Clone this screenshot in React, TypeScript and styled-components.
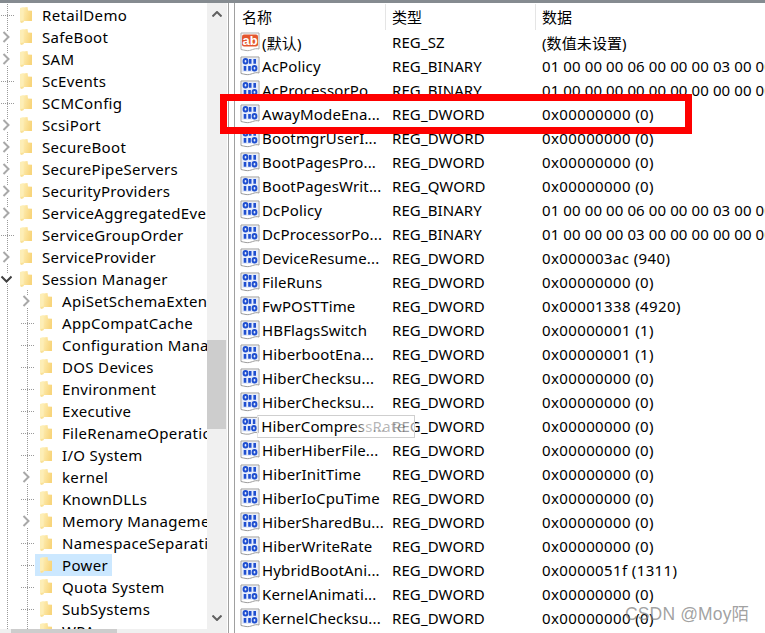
import React from "react";
import styled, { createGlobalStyle } from "styled-components";

const Global = createGlobalStyle`
  html, body { margin: 0; padding: 0; background: #fff; }
  body { font-family: "Noto Sans", "Noto Sans CJK SC", sans-serif; font-size: 15px; color: #000; }
`;

const Window = styled.div`
  position: relative;
  width: 765px;
  height: 633px;
  overflow: hidden;
  display: flex;
  box-sizing: border-box;
  border-top: 3px solid #858b90;
  background: #fff;
`;

const LeftPane = styled.div`
  width: 227px;
  flex: none;
  display: flex;
  flex-direction: column;
`;
const LeftBody = styled.div`
  flex: 1;
  min-height: 0;
  display: flex;
`;
const Tree = styled.div`
  width: 207px;
  flex: none;
  overflow: hidden;
  padding-top: 1px;
  box-sizing: border-box;
`;
const TreeRow = styled.div`
  display: flex;
  height: 22px;
  white-space: nowrap;
`;
const dots = `linear-gradient(#9a9a9a 50%, transparent 50%)`;
const hdots = `linear-gradient(to right, #9a9a9a 50%, transparent 50%)`;
const Gutter = styled.div<{ $wide?: boolean; $branch?: boolean }>`
  width: ${(p) => (p.$wide ? 20 : 15)}px;
  height: 22px;
  flex: none;
  display: flex;
  align-items: center;
  background-image: ${dots}${(p) => (p.$branch ? `, ${hdots}` : "")};
  background-size: 1px 2px${(p) => (p.$branch ? `, 2px 1px` : "")};
  background-position: 7px 0${(p) => (p.$branch ? `, 9px 11px` : "")};
  background-repeat: repeat-y${(p) => (p.$branch ? `, repeat-x` : "")};
`;
const ChevronBox = styled.svg`
  flex: none;
  background: #fff;
  display: block;
`;
const TreeLabel = styled.div<{ $selected?: boolean }>`
  display: flex;
  align-items: center;
  height: 22px;
  padding: 0 4px 0 5px;
  gap: 10px;
  background: ${(p) => (p.$selected ? "#cce8ff" : "transparent")};
`;
const TreeText = styled.span`
  line-height: 22px;
  letter-spacing: 0.33px;
`;

const VScroll = styled.div`
  width: 20px;
  flex: none;
  background: #f0f0f0;
  display: flex;
  flex-direction: column;
  align-items: stretch;
`;
const ArrowSlot = styled.div<{ $bottom?: boolean }>`
  height: 22px;
  display: flex;
  align-items: center;
  justify-content: center;
  margin-top: ${(p) => (p.$bottom ? "auto" : "0")};
`;
const VThumb = styled.div`
  height: 89px;
  margin: 315px 1px 0 0;
  background: #cdcdcd;
`;
const HScroll = styled.div`
  height: 4px;
  flex: none;
  background: #f0f0f0;
  padding-left: 11px;
`;
const HThumb = styled.div`
  width: 106px;
  height: 100%;
  background: #cdcdcd;
`;

const Splitter = styled.div`
  width: 7px;
  flex: none;
  box-sizing: border-box;
  margin-left: 1px;
  border-left: 1px solid #a0a0a0;
  border-right: 1px solid #a0a0a0;
`;

const ListPane = styled.div`
  flex: 1;
  min-width: 0;
  display: flex;
  flex-direction: column;
  overflow: hidden;
`;
const columns = `150px 150px 1fr`;
const HeaderRow = styled.div`
  display: grid;
  grid-template-columns: ${columns};
  height: 26px;
  flex: none;
  margin-top: 1px;
`;
const HeaderCell = styled.div<{ $sep?: boolean }>`
  padding-left: ${(p) => (p.$sep ? 6 : 7)}px;
  line-height: 26px;
  height: 26px;
  border-left: ${(p) => (p.$sep ? "1px solid #e5e5e5" : "none")};
`;
const ListRow = styled.div`
  display: grid;
  grid-template-columns: ${columns};
  height: 24px;
  flex: none;
  align-items: center;
  white-space: nowrap;
`;
const NameCell = styled.div`
  display: flex;
  align-items: center;
  gap: 2px;
  padding-left: 5px;
  overflow: hidden;
`;
const PlainCell = styled.div<{ $hex?: boolean }>`
  padding-left: 7px;
  overflow: hidden;
  letter-spacing: ${(p) => (p.$hex ? 0.38 : 0.1)}px;
`;
const NameText = styled.span`
  letter-spacing: 0.15px;
`;

const RedBox = styled.div`
  position: absolute;
  left: 220px;
  top: 91px;
  width: 472px;
  height: 40px;
  box-sizing: border-box;
  border: 7px solid #fe0000;
`;
const Tip = styled.div`
  position: absolute;
  left: 257px;
  top: 412px;
  width: 158px;
  height: 23px;
  box-sizing: border-box;
  border: 1px solid #cfcfcf;
  border-left-color: #e6e6e6;
  background: linear-gradient(to right, rgba(255,255,255,0) 60%, rgba(255,255,255,0.75) 70%, rgba(255,255,255,0.6) 100%);
  display: flex;
  align-items: center;
  justify-content: flex-end;
  padding-right: 8px;
  color: rgba(0, 0, 0, 0.3);
  line-height: 21px;
  letter-spacing: 0.5px;
`;
const Watermark = styled.div`
  position: absolute;
  left: 625px;
  top: 600px;
  font-family: "Liberation Sans", "Noto Sans CJK SC", sans-serif;
  font-size: 17.5px;
  letter-spacing: 0.15px;
  line-height: 22px;
  color: rgba(120, 120, 120, 0.7);
  white-space: nowrap;
`;

const Folder = () => (
  <svg width="12" height="16" viewBox="0 0 12 16">
    <defs>
      <linearGradient id="fg" x1="0" y1="0" x2="1" y2="0.3">
        <stop offset="0" stopColor="#feeeb4" />
        <stop offset="1" stopColor="#f8d57c" />
      </linearGradient>
    </defs>
    <path d="M0 1 L3.5 0 L4 15 L1 16 L0 14.5Z" fill="#fdeeb6" />
    <path d="M3 0.5 L7.5 0 L8 3.5 L12 3.8 L12 14 L3.5 14 Z" fill="url(#fg)" />
    <path d="M0.5 14 L3.5 13.5 L3.5 15 L1 16Z" fill="#f9e099" />
  </svg>
);

const Chevron = ({ open }: { open?: boolean }) =>
  open ? (
    <ChevronBox width="12" height="10" viewBox="0 0 12 10">
      <path d="M1.5 2.5 L6.5 7.5 L11.5 2.5" fill="none" stroke="#404040" strokeWidth="2" />
    </ChevronBox>
  ) : (
    <ChevronBox width="10" height="12" viewBox="0 0 10 12">
      <path d="M3.5 1 L8.5 6 L3.5 11" fill="none" stroke="#a8a8a8" strokeWidth="2" />
    </ChevronBox>
  );

const BinIcon = () => (
  <svg width="20" height="20" viewBox="0 0 20 20">
    <path d="M1 1 H19 V17 C14 15.5 11 19.5 6 18.5 C4 18 2.5 18 1 17.5 Z" fill="#fff" stroke="#9d9d9d" />
    <rect x="2" y="2" width="16" height="14" fill="#e6ecfa" />
    <g fill="none" stroke="#1f4fd0" strokeWidth="2">
      <ellipse cx="5.5" cy="5.3" rx="1.9" ry="2.3" />
      <path d="M10.2 3 V7.8 M14.7 3 V7.8" strokeWidth="2.6" />
      <path d="M5 10 V14.8 M9.5 10 V14.8" strokeWidth="2.6" />
      <ellipse cx="14.5" cy="12.3" rx="1.9" ry="2.3" />
    </g>
  </svg>
);

const AbIcon = () => (
  <svg width="20" height="20" viewBox="0 0 20 20">
    <path d="M1 1 H19 V17 C14 15.5 11 19.5 6 18.5 C4 18 2.5 18 1 17.5 Z" fill="#fff" stroke="#adadad" />
    <rect x="2" y="2.5" width="16" height="12" rx="2" fill="#e4572f" />
    <text x="10" y="12.5" textAnchor="middle" fontFamily="Liberation Sans" fontWeight="700" fontSize="13" fill="#fff">ab</text>
  </svg>
);

type Node = { t: string; lvl: 1 | 2; c?: boolean; open?: boolean; sel?: boolean };
const nodes: Node[] = [
  { t: "RetailDemo", lvl: 1 },
  { t: "SafeBoot", lvl: 1, c: true },
  { t: "SAM", lvl: 1, c: true },
  { t: "ScEvents", lvl: 1 },
  { t: "SCMConfig", lvl: 1 },
  { t: "ScsiPort", lvl: 1, c: true },
  { t: "SecureBoot", lvl: 1, c: true },
  { t: "SecurePipeServers", lvl: 1, c: true },
  { t: "SecurityProviders", lvl: 1, c: true },
  { t: "ServiceAggregatedEvents", lvl: 1, c: true },
  { t: "ServiceGroupOrder", lvl: 1 },
  { t: "ServiceProvider", lvl: 1, c: true },
  { t: "Session Manager", lvl: 1, c: true, open: true },
  { t: "ApiSetSchemaExtensions", lvl: 2, c: true },
  { t: "AppCompatCache", lvl: 2 },
  { t: "Configuration Manager", lvl: 2 },
  { t: "DOS Devices", lvl: 2 },
  { t: "Environment", lvl: 2 },
  { t: "Executive", lvl: 2 },
  { t: "FileRenameOperations", lvl: 2 },
  { t: "I/O System", lvl: 2 },
  { t: "kernel", lvl: 2, c: true },
  { t: "KnownDLLs", lvl: 2 },
  { t: "Memory Management", lvl: 2, c: true },
  { t: "NamespaceSeparation", lvl: 2 },
  { t: "Power", lvl: 2, sel: true },
  { t: "Quota System", lvl: 2 },
  { t: "SubSystems", lvl: 2 },
  { t: "WPA", lvl: 2 },
];

const D0 = "0x00000000 (0)";
const D1 = "0x00000001 (1)";
const DW = "REG_DWORD";
const BIN = "REG_BINARY";
const rows: [string, string, string][] = [
  ["AcPolicy", BIN, "01 00 00 00 06 00 00 00 03 00 00 00 00 00"],
  ["AcProcessorPo...", BIN, "01 00 00 00 00 00 00 00 00 00 00 00 00 00"],
  ["AwayModeEna...", DW, D0],
  ["BootmgrUserI...", DW, D0],
  ["BootPagesPro...", DW, D0],
  ["BootPagesWrit...", "REG_QWORD", D0],
  ["DcPolicy", BIN, "01 00 00 00 06 00 00 00 03 00 00 00 00 00"],
  ["DcProcessorPo...", BIN, "01 00 00 00 03 00 00 00 00 00 00 00 00 00"],
  ["DeviceResume...", DW, "0x000003ac (940)"],
  ["FileRuns", DW, D0],
  ["FwPOSTTime", DW, "0x00001338 (4920)"],
  ["HBFlagsSwitch", DW, D1],
  ["HiberbootEna...", DW, D1],
  ["HiberChecksu...", DW, D0],
  ["HiberChecksu...", DW, D0],
  ["HiberCompress...", DW, D0],
  ["HiberHiberFile...", DW, D0],
  ["HiberInitTime", DW, D0],
  ["HiberIoCpuTime", DW, D0],
  ["HiberSharedBu...", DW, D0],
  ["HiberWriteRate", DW, D0],
  ["HybridBootAni...", DW, "0x0000051f (1311)"],
  ["KernelAnimati...", DW, D0],
  ["KernelChecksu...", DW, D0],
];

export default function App() {
  return (
    <>
      <Global />
      <Window>
        <LeftPane>
          <LeftBody>
            <Tree>
              {nodes.map((n) => (
                <TreeRow key={n.t}>
                  {n.lvl === 2 && <Gutter $wide />}
                  <Gutter $branch={!n.c}>
                    {n.c && <Chevron open={n.open} />}
                  </Gutter>
                  <TreeLabel $selected={n.sel}>
                    <Folder />
                    <TreeText>{n.t}</TreeText>
                  </TreeLabel>
                </TreeRow>
              ))}
            </Tree>
            <VScroll>
              <ArrowSlot>
                <svg width="10" height="6" viewBox="0 0 10 6">
                  <path d="M0.5 5.5 L5 1 L9.5 5.5" fill="none" stroke="#606060" strokeWidth="2" />
                </svg>
              </ArrowSlot>
              <VThumb />
              <ArrowSlot $bottom>
                <svg width="10" height="6" viewBox="0 0 10 6">
                  <path d="M0.5 0.5 L5 5 L9.5 0.5" fill="none" stroke="#606060" strokeWidth="2" />
                </svg>
              </ArrowSlot>
            </VScroll>
          </LeftBody>
          <HScroll>
            <HThumb />
          </HScroll>
        </LeftPane>
        <Splitter />
        <ListPane>
          <HeaderRow>
            <HeaderCell>名称</HeaderCell>
            <HeaderCell $sep>类型</HeaderCell>
            <HeaderCell $sep>数据</HeaderCell>
          </HeaderRow>
          <ListRow>
            <NameCell>
              <AbIcon />
              <NameText>(默认)</NameText>
            </NameCell>
            <PlainCell>REG_SZ</PlainCell>
            <PlainCell>(数值未设置)</PlainCell>
          </ListRow>
          {rows.map(([a, b, c], i) => (
            <ListRow key={i}>
              <NameCell>
                <BinIcon />
                <NameText>{a}</NameText>
              </NameCell>
              <PlainCell>{b}</PlainCell>
              <PlainCell $hex={c.startsWith("0x")}>{c}</PlainCell>
            </ListRow>
          ))}
        </ListPane>
        <RedBox />
        <Tip>Rate</Tip>
        <Watermark>CSDN @Moy陌</Watermark>
      </Window>
    </>
  );
}
